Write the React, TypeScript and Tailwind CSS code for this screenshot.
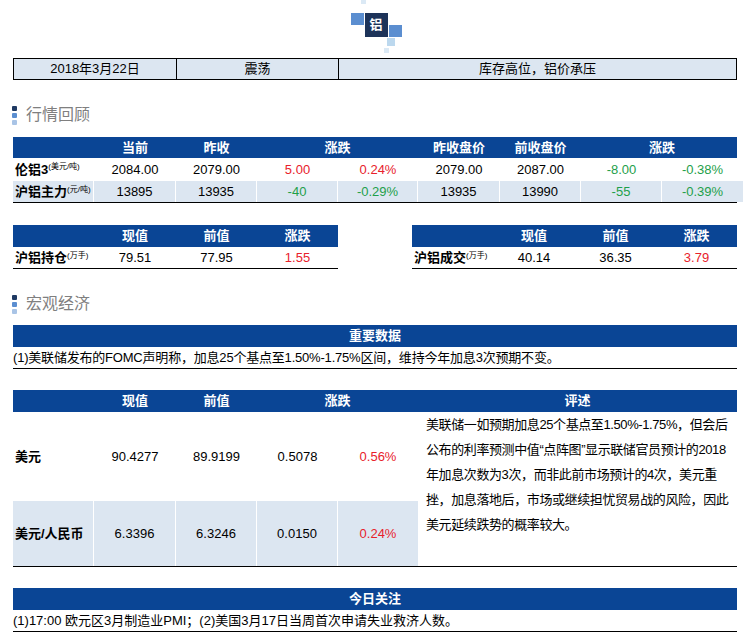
const F = { fontFamily: '"Liberation Sans", "Noto Sans CJK SC", sans-serif' };
const H = 'bg-[#0a4595] text-white font-bold';
const RED = 'text-[#e8212b]';
const GRN = 'text-[#1ea04a]';

function Section({ title }: { title: string }) {
  return (
    <div className="flex items-center gap-[9px] pl-[12px] h-[24px]">
      <div className="flex flex-col gap-[2px]">
        <div className="w-[5px] h-[5px] rounded-[1px] bg-[#1f3a63]" />
        <div className="w-[5px] h-[5px] rounded-[1px] bg-[#5b8ed0]" />
        <div className="w-[5px] h-[5px] rounded-[1px] bg-[#a9c4e6]" />
      </div>
      <span className="text-[16px] text-[#7f7f7f]">{title}</span>
    </div>
  );
}

function Unit({ t }: { t: string }) {
  return <span className="text-[8px] font-normal self-start mt-[3px]">{t}</span>;
}

function SmallTable({ label, unit, vals }: { label: string; unit: string; vals: string[] }) {
  return (
    <div className="w-[325px]">
      <div className={`grid grid-cols-[81px_82px_81px_81px] h-[22px] items-center text-center text-[13px] ${H}`}>
        <div /><div>现值</div><div>前值</div><div>涨跌</div>
      </div>
      <div className="grid grid-cols-[81px_82px_81px_81px] h-[22px] items-center text-center text-[13px] border-b border-black">
        <div className="flex h-full items-center pl-[2px] font-bold">{label}<Unit t={unit} /></div>
        <div>{vals[0]}</div><div>{vals[1]}</div><div className={RED}>{vals[2]}</div>
      </div>
    </div>
  );
}

export default function App() {
  const cols = 'grid grid-cols-[81px_82px_81px_81px_80px_82px_81px_81px_81px]';
  return (
    <div className="w-[750px] h-[644px] bg-white text-black overflow-hidden" style={F}>
      <div className="h-[58px] flex justify-center">
        <div className="relative w-[52px] h-[54px] ml-[3px]">
          <div className="absolute left-[10px] top-0 w-[5px] h-[4px] bg-[#dbe9f5]" />
          <div className="absolute left-0 top-[13px] w-[13px] h-[12px] bg-[#5b8ed0]" />
          <div className="absolute left-[14px] top-[13px] w-[23px] h-[24px] bg-[#1d3359] text-white text-[13px] font-bold flex items-center justify-center">铝</div>
          <div className="absolute left-[38px] top-[25px] w-[13px] h-[12px] bg-[#5b8ed0]" />
          <div className="absolute left-[36px] top-[38px] w-[8px] h-[8px] bg-[#bcd8ee]" />
          <div className="absolute left-[33px] top-[48px] w-[5px] h-[5px] bg-[#dbe9f5]" />
        </div>
      </div>
      <div className="mx-[13px] grid grid-cols-[163px_162px_1fr] h-[22px] items-center text-center text-[13px] bg-[#dce6f1] border border-black">
        <div className="border-r border-black h-full leading-[20px]">2018年3月22日</div>
        <div className="border-r border-black h-full leading-[20px]">震荡</div>
        <div>库存高位，铝价承压</div>
      </div>

      <div className="mt-[23px]"><Section title="行情回顾" /></div>

      <div className="mx-[13px] mt-[10px] text-[13px] text-center">
        <div className={`${cols} h-[21px] items-center ${H}`}>
          <div /><div>当前</div><div>昨收</div><div className="col-span-2">涨跌</div><div>昨收盘价</div><div>前收盘价</div><div className="col-span-2">涨跌</div>
        </div>
        <div className={`${cols} h-[23px] items-center`}>
          <div className="flex h-full items-center pl-[2px] font-bold">伦铝3<Unit t="(美元/吨)" /></div>
          <div>2084.00</div><div>2079.00</div><div className={RED}>5.00</div><div className={RED}>0.24%</div>
          <div>2079.00</div><div>2087.00</div><div className={GRN}>-8.00</div><div className={GRN}>-0.38%</div>
        </div>
        <div className={`${cols} h-[22px] items-stretch border-b border-black`}>
          {[
            ['沪铝主力', ''], ['13895', ''], ['13935', ''], ['-40', GRN], ['-0.29%', GRN],
            ['13935', ''], ['13990', ''], ['-55', GRN], ['-0.39%', GRN],
          ].map(([t, c], i) => (
            <div key={i} className={`bg-[#dce6f1] flex items-center ${i < 8 ? 'border-r border-white' : ''} ${i === 0 ? 'pl-[2px] font-bold' : 'justify-center'} ${c}`}>
              {t}{i === 0 && <Unit t="(元/吨)" />}
            </div>
          ))}
        </div>
      </div>

      <div className="mx-[13px] mt-[22px] flex justify-between">
        <SmallTable label="沪铝持仓" unit="(万手)" vals={['79.51', '77.95', '1.55']} />
        <SmallTable label="沪铝成交" unit="(万手)" vals={['40.14', '36.35', '3.79']} />
      </div>

      <div className="mt-[23px]"><Section title="宏观经济" /></div>

      <div className="mx-[13px] mt-[9px] text-[13px]">
        <div className={`h-[22px] flex items-center justify-center ${H}`}>重要数据</div>
        <div className="h-[22px] flex items-center border-b border-black tracking-[-0.2px]">(1)美联储发布的FOMC声明称，加息25个基点至1.50%-1.75%区间，维持今年加息3次预期不变。</div>
      </div>

      <div className="mx-[13px] mt-[21px] text-[13px]">
        <div className={`grid grid-cols-[81px_82px_81px_81px_80px_1fr] h-[22px] items-center text-center ${H}`}>
          <div /><div>现值</div><div>前值</div><div className="col-span-2">涨跌</div><div>评述</div>
        </div>
        <div className="grid grid-cols-[405px_1fr] border-b border-black">
          <div className="flex flex-col">
            <div className="grid grid-cols-[81px_82px_81px_81px_80px] h-[89px] items-center text-center">
              <div className="text-left pl-[2px] font-bold">美元</div>
              <div>90.4277</div><div>89.9199</div><div>0.5078</div><div className={RED}>0.56%</div>
            </div>
            <div className="grid grid-cols-[81px_82px_81px_81px_80px] h-[65px]">
              {['美元/人民币', '6.3396', '6.3246', '0.0150', '0.24%'].map((t, i) => (
                <div key={i} className={`bg-[#dce6f1] flex items-center ${i < 4 ? 'border-r border-white' : ''} ${i === 0 ? 'pl-[2px] font-bold' : 'justify-center'} ${i === 4 ? RED : ''}`}>{t}</div>
              ))}
            </div>
          </div>
          <div className="pl-[8px] pr-0 leading-[25px] tracking-[-0.4px]">
            美联储一如预期加息25个基点至1.50%-1.75%，但会后公布的利率预测中值“点阵图”显示联储官员预计的2018年加息次数为3次，而非此前市场预计的4次，美元重挫，加息落地后，市场或继续担忧贸易战的风险，因此美元延续跌势的概率较大。
          </div>
        </div>
      </div>

      <div className="mx-[13px] mt-[21px] text-[13px]">
        <div className={`h-[22px] flex items-center justify-center ${H}`}>今日关注</div>
        <div className="h-[22px] flex items-center border-b border-black">(1)17:00 欧元区3月制造业PMI；(2)美国3月17日当周首次申请失业救济人数。</div>
      </div>
    </div>
  );
}
